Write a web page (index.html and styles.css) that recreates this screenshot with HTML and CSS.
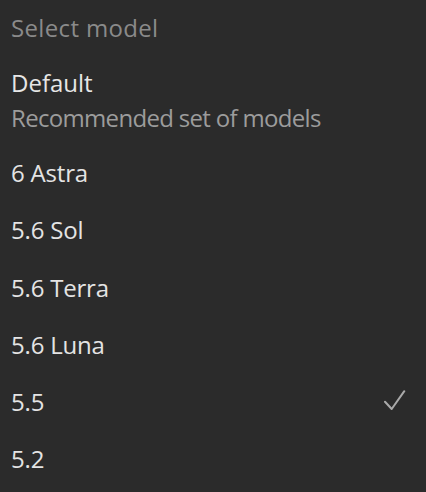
FILE: index.html
```html
<!DOCTYPE html>
<html lang="en">
<head>
<meta charset="utf-8">
<title>Select model</title>
<link rel="stylesheet" href="styles.css">
</head>
<body>
<div class="menu">
  <div class="menu-title">Select model</div>
  <div class="default-option">
    <div class="option-name">Default</div>
    <div class="option-desc">Recommended set of models</div>
  </div>
  <ul class="model-list">
    <li class="model-item">6 Astra</li>
    <li class="model-item">5.6 Sol</li>
    <li class="model-item">5.6 Terra</li>
    <li class="model-item">5.6 Luna</li>
    <li class="model-item is-selected">
      <span>5.5</span>
      <svg class="check" width="22" height="20" viewBox="0 0 22 20" aria-hidden="true">
        <path d="M1 11.7 L7.7 19 L20.3 1.2" fill="none" stroke="#a9a9a9" stroke-width="2" stroke-linecap="round" stroke-linejoin="round"/>
      </svg>
    </li>
    <li class="model-item">5.2</li>
  </ul>
</div>
</body>
</html>
```

FILE: styles.css
```css
html, body {
  margin: 0;
  padding: 0;
  background: #2b2b2b;
}

body {
  width: 426px;
  height: 492px;
  overflow: hidden;
  font-family: "Open Sans", "Noto Sans", sans-serif;
  font-size: 24px;
  letter-spacing: -0.2px;
}

.menu {
  display: flex;
  flex-direction: column;
  padding: 13px 20px 0 11px;
}

.menu-title {
  line-height: 30px;
  color: #8a8a8a;
  letter-spacing: 0.35px;
}

.default-option {
  display: flex;
  flex-direction: column;
  gap: 5px;
  margin-top: 25px;
}

.option-name {
  line-height: 30px;
  color: #e6e6e6;
  letter-spacing: 0;
}

.option-desc {
  line-height: 30px;
  color: #9c9c9c;
  letter-spacing: -0.68px;
}

.model-list {
  list-style: none;
  margin: 11px 0 0;
  padding: 0;
  display: flex;
  flex-direction: column;
}

.model-item {
  height: 57.3px;
  line-height: 57.3px;
  color: #e4e4e4;
  display: flex;
  align-items: center;
  justify-content: space-between;
}

.check {
  display: block;
  margin-top: -4px;
}
```
